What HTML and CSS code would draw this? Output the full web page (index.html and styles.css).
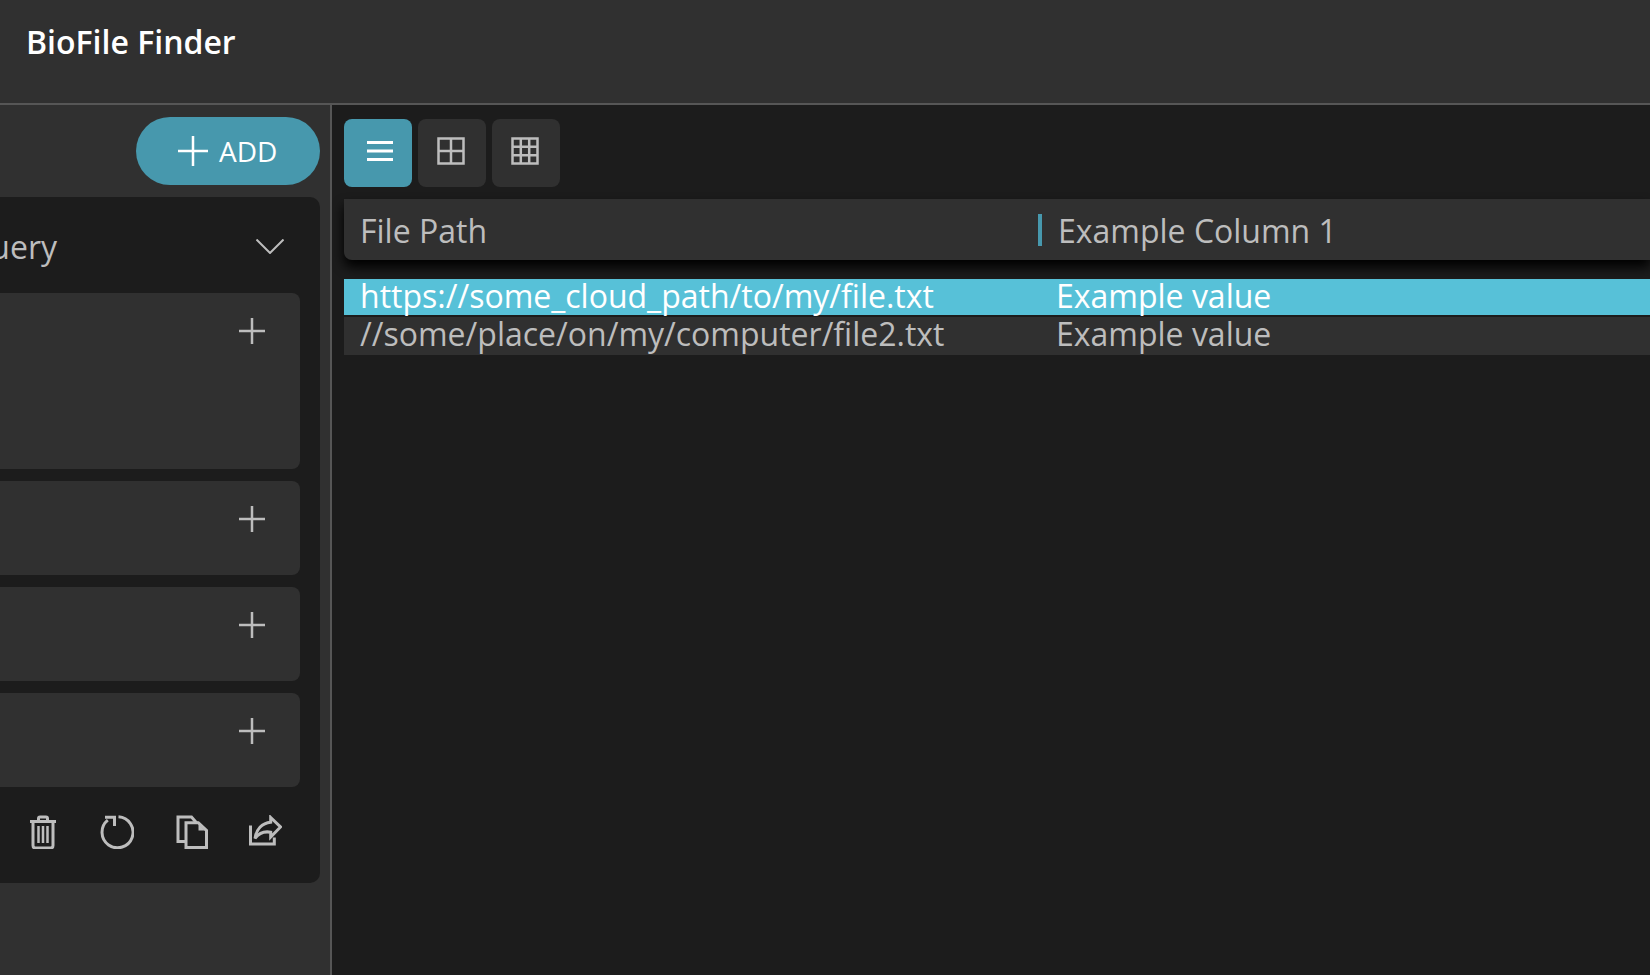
FILE: index.html
```html
<!DOCTYPE html>
<html lang="en">
<head>
<meta charset="utf-8">
<title>BioFile Finder</title>
<link rel="stylesheet" href="styles.css">
</head>
<body>
<header class="topbar"><h1 class="brand">BioFile Finder</h1></header>
<div class="main">
  <aside class="sidebar">
    <div class="add-row">
      <button class="add-btn">
        <svg class="add-plus" viewBox="0 0 30 30"><path d="M15 0V30M0 15H30"/></svg>
        <span>ADD</span>
      </button>
    </div>
    <section class="query">
      <div class="query-head">
        <span class="query-title">Query</span>
        <svg class="chevron" viewBox="0 0 28 15"><path d="M.5.5 14 14 27.5.5"/></svg>
      </div>
      <div class="cards">
        <div class="card card-tall"><svg class="plus" viewBox="0 0 26 26"><path d="M13 0V26M0 13H26"/></svg></div>
        <div class="card"><svg class="plus" viewBox="0 0 26 26"><path d="M13 0V26M0 13H26"/></svg></div>
        <div class="card"><svg class="plus" viewBox="0 0 26 26"><path d="M13 0V26M0 13H26"/></svg></div>
        <div class="card"><svg class="plus" viewBox="0 0 26 26"><path d="M13 0V26M0 13H26"/></svg></div>
      </div>
      <div class="tools">
        <svg class="tool" viewBox="0 0 34 34"><path d="M4 6.500H30M12.500 6V3.500Q12.500 2 14 2H20Q21.500 2 21.500 3.500V6M7 7V30.500Q7 33 9.500 33H24.500Q27 33 27 30.500V7"/><path class="thin" d="M12.500 11V28M17 11V28M21.500 11V28"/></svg>
        <svg class="tool" viewBox="-1 0 34 34"><path d="M17.500 1.800A15.500 15.500 0 1 1 6.800 5.200"/><path d="M4 2.200H13.500V11"/></svg>
        <svg class="tool" viewBox="-1 0 34 34"><path d="M11 26.500H3V2H16.500L21.500 7.700"/><path d="M11 7.700H23.300L31.500 15.500V32.500H11Z"/><path class="corner" d="M23.500 9V15.500H30Z"/></svg>
        <svg class="tool" viewBox="0 0 34 34"><path d="M2.500 10.500V29H26.300V22.500"/><path d="M22.700 2.500 32.500 12 22.700 22V17.200C16 16 10.500 18.500 7 23.500 8 14.500 14 8 22.700 7.200Z"/></svg>
      </div>
    </section>
  </aside>
  <main class="content">
    <div class="view-tabs">
      <button class="tab tab-active"><svg class="icon-lines" viewBox="0 0 26 20"><path class="lines" d="M0 1.500H26M0 10H26M0 18.500H26"/></svg></button>
      <button class="tab"><svg class="icon-grid" viewBox="0 0 28 28"><path class="grid" d="M1.500 1.500H26.500V26.500H1.500ZM14 1.500V26.500M1.500 14H26.500"/></svg></button>
      <button class="tab"><svg class="icon-grid" viewBox="0 0 28 28"><path class="grid" d="M1.500 1.500H26.500V26.500H1.500ZM9.800 1.500V26.500M18.200 1.500V26.500M1.500 9.800H26.500M1.500 18.200H26.500"/></svg></button>
    </div>
    <div class="table-head">
      <div class="col col-path">File Path</div>
      <div class="col col-example">Example Column 1</div>
    </div>
    <div class="rows">
      <div class="row row-selected"><span class="cell-path">https://some_cloud_path/to/my/file.txt</span><span class="cell-example">Example value</span></div>
      <div class="row row-plain"><span class="cell-path">//some/place/on/my/computer/file2.txt</span><span class="cell-example">Example value</span></div>
    </div>
  </main>
</div>
</body>
</html>
```

FILE: styles.css
```css
* { box-sizing: border-box; }
html, body { margin: 0; height: 100%; }
body {
  display: flex;
  flex-direction: column;
  height: 975px;
  overflow: hidden;
  background: #1c1c1c;
  color: #bdbdbd;
  font-family: "Open Sans", "Noto Sans", sans-serif;
}
.topbar {
  height: 105px;
  flex: none;
  display: flex;
  padding: 25px 0 0 26px;
  background: #303030;
  border-bottom: 2px solid #565656;
}
.brand {
  margin: 0;
  font-size: 32px;
  line-height: 34px;
  font-weight: 600;
  color: #fff;
}
.main { flex: 1; display: flex; min-height: 0; }
.sidebar {
  width: 332px;
  flex: none;
  display: flex;
  flex-direction: column;
  align-items: flex-end;
  overflow: hidden;
  padding: 12px 10px 0 0;
  background: #303030;
  border-right: 2px solid #565656;
}
.add-row { height: 80px; flex: none; }
.add-btn {
  width: 184px;
  height: 68px;
  display: flex;
  align-items: center;
  padding: 0 0 0 42px;
  gap: 11px;
  border: 0;
  border-radius: 34px;
  background: #4798ad;
  color: #fff;
  font: 500 28px "Open Sans", sans-serif;
}
.add-plus { width: 30px; height: 30px; flex: none; fill: none; stroke: #fff; stroke-width: 2.500; }
.query {
  width: 420px;
  flex: none;
  padding-bottom: 34px;
  border-radius: 10px;
  background: #1c1c1c;
}
.query-head {
  height: 96px;
  display: flex;
  align-items: center;
  justify-content: flex-end;
  padding: 2px 36px 0 0;
}
.query-title { margin-right: 199px; font-size: 32px; line-height: 44px; padding-top: 2px; }
.chevron { width: 28px; height: 15px; flex: none; fill: none; stroke: #bdbdbd; stroke-width: 2; }
.cards {
  display: flex;
  flex-direction: column;
  gap: 12px;
  margin-right: 20px;
}
.card {
  height: 94px;
  display: flex;
  justify-content: flex-end;
  padding: 25px 35px 0 0;
  border-radius: 8px;
  background: #303030;
}
.card-tall { height: 176px; }
.plus { width: 26px; height: 26px; fill: none; stroke: #bdbdbd; stroke-width: 2.500; }
.tools {
  display: flex;
  justify-content: flex-end;
  gap: 40px;
  padding: 28px 38px 0 0;
}
.tool { width: 34px; height: 34px; fill: none; stroke: #bdbdbd; stroke-width: 3; }
.tool .thin { stroke-width: 2.500; }
.tool .corner { fill: #bdbdbd; stroke: none; }
.content { flex: 1; min-width: 0; padding: 14px 0 0 12px; background: #1c1c1c; }
.view-tabs { display: flex; gap: 6px; }
.tab {
  width: 68px;
  height: 68px;
  display: flex;
  align-items: center;
  justify-content: center;
  padding: 0 2px 4px 0;
  border: 0;
  border-radius: 8px;
  background: #303030;
}
.tab-active { background: #4798ad; padding: 0 0 4px 4px; }
.icon-lines { width: 26px; height: 20px; fill: none; }
.icon-grid { width: 28px; height: 28px; fill: none; }
.lines { stroke: #fff; stroke-width: 3; }
.grid { stroke: #bdbdbd; stroke-width: 2.500; }
.table-head {
  height: 61px;
  margin-top: 12px;
  padding-top: 1px;
  display: flex;
  align-items: center;
  border-radius: 0 0 0 8px;
  background: #303030;
  box-shadow: 0 7px 12px #000;
  font-size: 32px;
}
.col-path { width: 694px; padding-left: 16px; }
.col-example { height: 32px; display: flex; align-items: center; padding-left: 16px; border-left: 4px solid #4798ad; }
.rows { margin-top: 19px; }
.row { display: flex; align-items: center; font-size: 32px; line-height: 32px; background: #303030; }
.row-selected { height: 36px; margin-bottom: 2px; padding-bottom: 2px; background: #57c1d8; color: #fff; }
.row-plain { height: 38px; padding-bottom: 4px; }
.cell-path { width: 712px; padding-left: 16px; flex: none; white-space: nowrap; }
.cell-example { white-space: nowrap; }
```
